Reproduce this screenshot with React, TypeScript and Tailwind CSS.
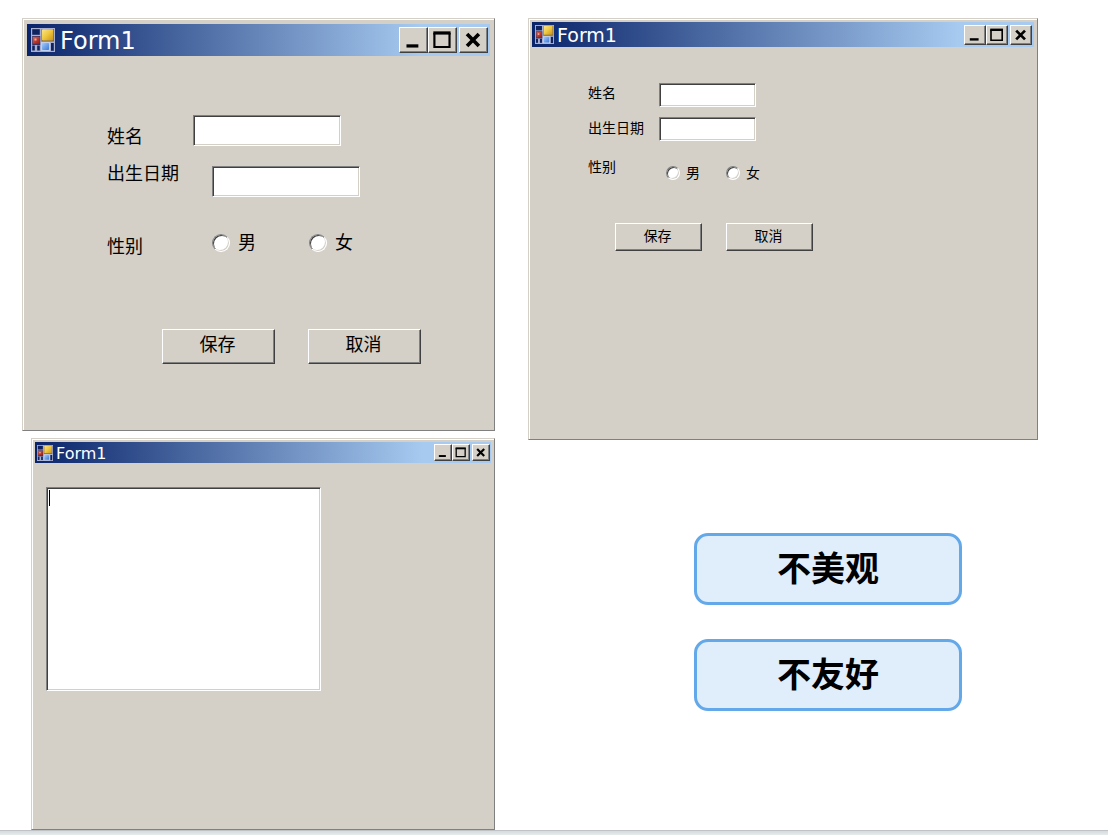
import { type ReactNode, useId } from "react";
import clsx from "clsx";

/* ── Sizes ── */

type Size = "sm" | "md" | "lg";

const titleBarSize: Record<Size, string> = {
  sm: "h-[21px] gap-[3px] pl-[2px] pr-px text-[16px]",
  md: "h-[25px] gap-[3px] pl-[3px] pr-[2px] text-[19px]",
  lg: "h-[32px] gap-[5px] pl-[4px] pr-[2px] text-[24px]",
};

const framePadding: Record<Size, string> = {
  sm: "p-[3px]",
  md: "p-[3px]",
  lg: "px-[4px] py-[5px]",
};

const appIconSize: Record<Size, string> = {
  sm: "size-[16px]",
  md: "size-[19px]",
  lg: "size-[24px]",
};

const captionButtonSize: Record<Size, string> = {
  sm: "w-[18px] h-[17px]",
  md: "w-[22px] h-[20px]",
  lg: "w-[29px] h-[26px]",
};

const raised =
  "border border-t-white border-l-white border-b-[#404040] border-r-[#404040] bg-[#d4d0c8] shadow-[inset_-1px_-1px_0_#808080]";
const sunken =
  "border border-t-[#808080] border-l-[#808080] border-b-white border-r-white bg-white shadow-[inset_1px_1px_0_#404040,inset_-1px_-1px_0_#d4d0c8]";

/* ── Icons ── */

function AppIcon({ className }: { className: string }) {
  return (
    <svg viewBox="0 0 24 24" className={clsx("shrink-0", className)} aria-hidden="true">
      <defs>
        <linearGradient id="app-yellow" x1="0" y1="0" x2="1" y2="1">
          <stop offset="0" stopColor="#fbe58f" />
          <stop offset="0.5" stopColor="#efc63c" />
          <stop offset="1" stopColor="#c8921a" />
        </linearGradient>
        <linearGradient id="app-red" x1="0" y1="0" x2="1" y2="1">
          <stop offset="0" stopColor="#d8604c" />
          <stop offset="1" stopColor="#981a14" />
        </linearGradient>
        <linearGradient id="app-blue" x1="0" y1="0" x2="1" y2="1">
          <stop offset="0" stopColor="#a4ccfb" />
          <stop offset="1" stopColor="#3c78d8" />
        </linearGradient>
      </defs>
      <rect width="24" height="24" fill="#a9afcf" />
      <rect x="1.200" y="1.200" width="7.600" height="5.600" fill="#0f2361" />
      <rect x="1.200" y="8" width="8" height="9" fill="#3a2f5e" />
      <rect x="1.200" y="17.500" width="2.600" height="5" fill="#0f2361" />
      <rect x="6.200" y="17.500" width="2.600" height="5" fill="#0f2361" />
      <rect x="10" y="14" width="9" height="9" fill="#c3d0ec" />
      <rect x="20" y="15" width="2.800" height="7.800" fill="#0f2361" />
      <rect x="10.500" y="1" width="12.500" height="12.500" fill="#7d6a4c" />
      <rect x="11" y="1.200" width="11.200" height="11.200" rx="0.800" fill="url(#app-yellow)" />
      <rect x="1.800" y="8.800" width="7" height="7" rx="0.800" fill="url(#app-red)" />
      <rect x="3.500" y="10.500" width="2" height="2" fill="#f0b0a0" />
      <rect x="11" y="15" width="7" height="7" rx="0.800" fill="url(#app-blue)" />
    </svg>
  );
}

const glyphs = {
  Minimize: <path d="M8 18h11" strokeWidth="3" />,
  Maximize: (
    <>
      <path d="M6 6h16" strokeWidth="3" />
      <path d="M7 6v13h14v-13" strokeWidth="2" />
    </>
  ),
  Close: <path d="M8.500 7l11 11M19.500 7l-11 11" strokeWidth="3.400" />,
};

/* ── Window ── */

function CaptionButton({
  name,
  size,
  className,
}: {
  name: keyof typeof glyphs;
  size: Size;
  className?: string;
}) {
  return (
    <button
      type="button"
      aria-label={name}
      className={clsx(raised, captionButtonSize[size], className)}
    >
      <svg viewBox="2 1.500 25 22" className="size-full" fill="none" stroke="#000">
        {glyphs[name]}
      </svg>
    </button>
  );
}

function FormWindow({
  size,
  className,
  children,
}: {
  size: Size;
  className?: string;
  children: ReactNode;
}) {
  return (
    <section
      className={clsx(
        "border border-t-[#d4d0c8] border-l-[#d4d0c8] border-b-[#808080] border-r-[#808080]",
        "bg-[#d4d0c8] shadow-[inset_1px_1px_0_#fff]",
        framePadding[size],
        className
      )}
    >
      <header
        className={clsx(
          "flex items-center bg-linear-to-r/srgb from-[#0a246a] to-[#a6caf0] to-85% text-white",
          titleBarSize[size]
        )}
      >
        <AppIcon className={appIconSize[size]} />
        <h2 className="flex-1 pt-[2px] font-['DejaVu_Sans',sans-serif] leading-none">Form1</h2>
        <div className="flex">
          <CaptionButton name="Minimize" size={size} />
          <CaptionButton name="Maximize" size={size} />
          <CaptionButton name="Close" size={size} className="ml-[2px]" />
        </div>
      </header>
      {children}
    </section>
  );
}

/* ── Controls ── */

function TextBox({ id, className }: { id: string; className: string }) {
  return <input id={id} type="text" className={clsx("block px-1 outline-none", sunken, className)} />;
}

function Radio({
  name,
  label,
  className,
  dotClassName,
}: {
  name: string;
  label: string;
  className: string;
  dotClassName: string;
}) {
  return (
    <label className={clsx("flex items-center", className)}>
      <input
        type="radio"
        name={name}
        className={clsx(
          "appearance-none rounded-full border bg-white",
          "border-t-[#808080] border-l-[#808080] border-b-white border-r-white",
          "shadow-[inset_1px_1px_0_#404040,inset_-1px_-1px_0_#d4d0c8] checked:bg-black",
          dotClassName
        )}
      />
      {label}
    </label>
  );
}

function PushButton({ className, children }: { className: string; children: ReactNode }) {
  return (
    <button type="button" className={clsx("pr-[2px] pb-[2px]", raised, className)}>
      {children}
    </button>
  );
}

/* ── Forms ── */

function MisalignedForm() {
  const id = useId();

  return (
    <FormWindow size="lg">
      <form className="pt-[59px] pb-[61px] text-[18px]">
        <div className="flex pl-[80px] leading-6">
          <div className="flex w-[86px] shrink-0 flex-col pt-[10px]">
            <label htmlFor={`${id}-name`}>姓名</label>
            <label htmlFor={`${id}-birth`} className="mt-[13px]">
              出生日期
            </label>
            <span id={`${id}-gender`} className="mt-[49px]">
              性别
            </span>
          </div>
          <div>
            <TextBox id={`${id}-name`} className="h-[31px] w-[148px]" />
            <TextBox id={`${id}-birth`} className="mt-5 ml-[19px] h-[31px] w-[148px]" />
            <div
              role="radiogroup"
              aria-labelledby={`${id}-gender`}
              className="mt-9 ml-[19px] flex gap-[53px] leading-5"
            >
              <Radio name={`${id}-g`} label="男" className="gap-2" dotClassName="size-[18px]" />
              <Radio name={`${id}-g`} label="女" className="gap-2" dotClassName="size-[18px]" />
            </div>
          </div>
        </div>
        <div className="mt-[70px] flex gap-[33px] pl-[135px]">
          <PushButton className="h-[35px] w-[113px]">保存</PushButton>
          <PushButton className="h-[35px] w-[113px]">取消</PushButton>
        </div>
      </form>
    </FormWindow>
  );
}

function CrampedForm() {
  const id = useId();

  return (
    <FormWindow size="md">
      <form className="pt-[36px] pb-[185px] text-[14px]">
        <div className="flex pl-[56px] leading-5">
          <div className="flex w-[71px] shrink-0 flex-col">
            <label htmlFor={`${id}-name`}>姓名</label>
            <label htmlFor={`${id}-birth`} className="mt-[15px]">
              出生日期
            </label>
            <span id={`${id}-gender`} className="mt-[19px]">
              性别
            </span>
          </div>
          <div>
            <TextBox id={`${id}-name`} className="h-6 w-[97px]" />
            <TextBox id={`${id}-birth`} className="mt-[10px] h-6 w-[97px]" />
            <div
              role="radiogroup"
              aria-labelledby={`${id}-gender`}
              className="mt-[22px] ml-[7px] flex gap-[26px]"
            >
              <Radio name={`${id}-g`} label="男" className="gap-[6px]" dotClassName="size-[14px]" />
              <Radio name={`${id}-g`} label="女" className="gap-[6px]" dotClassName="size-[14px]" />
            </div>
          </div>
        </div>
        <div className="mt-10 flex gap-6 pl-[83px]">
          <PushButton className="h-[28px] w-[87px]">保存</PushButton>
          <PushButton className="h-[28px] w-[87px]">取消</PushButton>
        </div>
      </form>
    </FormWindow>
  );
}

function FixedTextForm() {
  return (
    <FormWindow size="sm" className="ml-[9px]">
      <div className="pt-[24px] pb-[135px] pl-[11px]">
        <div className="relative w-[275px]">
          <textarea
            aria-label="Text"
            className={clsx("block h-[204px] w-full resize-none p-1 outline-none", sunken)}
          />
          {/* text cursor */}
          <span className="absolute top-[3px] left-[3px] h-4 w-px bg-black" />
        </div>
      </div>
    </FormWindow>
  );
}

/* ── Notes ── */

function Note({ children }: { children: ReactNode }) {
  return (
    <p className="flex h-[72px] w-[268px] items-center justify-center rounded-[14px] border-3 border-[#63a8e9] bg-[#e0edfb] text-[34px] leading-none font-bold">
      {children}
    </p>
  );
}

export default function App() {
  return (
    <div className="flex min-h-screen flex-col bg-white font-['Liberation_Sans','Noto_Sans_CJK_SC',sans-serif] text-black">
      <main className="grid flex-1 grid-cols-[473fr_510fr] gap-[33px] pt-[18px] pr-[70px] pl-[22px]">
        <div className="flex flex-col gap-[7px]">
          <MisalignedForm />
          <FixedTextForm />
        </div>
        <div>
          <CrampedForm />
          <div className="flex flex-col gap-[34px] pt-[93px] pl-[166px]">
            <Note>不美观</Note>
            <Note>不友好</Note>
          </div>
        </div>
      </main>
      <footer className="h-[5px] border-t border-[#bfc3c5] bg-linear-to-b from-[#d5dbde] to-[#e6ebeb]" />
    </div>
  );
}
